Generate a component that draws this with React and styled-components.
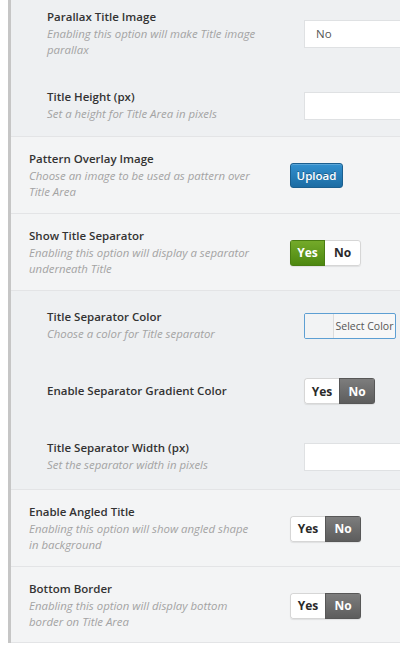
import React from 'react';
import styled, { createGlobalStyle, css } from 'styled-components';

const Global = createGlobalStyle`
  html, body { margin: 0; padding: 0; background: #fff; }
  body { font-family: "Open Sans", "Noto Sans", "Liberation Sans", sans-serif; }
  #root { width: 400px; height: 650px; overflow: hidden; }
`;

const Panel = styled.div`
  margin-left: 8px;
  border-left: 3px solid #c6c6c6;
  background: #f3f4f5;
`;

const Section = styled.div`
  background: ${p => (p.$nested ? '#eef0f2' : '#f3f4f5')};
  border-bottom: 1px solid #e3e4e6;
`;

const Row = styled.div`
  display: grid;
  grid-template-columns: ${p => (p.$nested ? '257px' : '261px')} 1fr;
  align-items: center;
  padding: ${p => p.$pt}px 0 ${p => p.$pb}px ${p => (p.$nested ? 36 : 18)}px;
`;

const Label = styled.div`
  display: flex;
  flex-direction: column;
`;

const Title = styled.div`
  font-size: 11.5px;
  line-height: 16px;
  font-weight: 600;
  color: #333;
  white-space: nowrap;
`;

const Desc = styled.div`
  margin-top: 1px;
  font-size: 11.4px;
  line-height: 16px;
  font-style: italic;
  color: #a3a3a3;
  white-space: nowrap;
`;

const Control = styled.div`
  display: flex;
  align-items: center;
  min-width: 0;
`;

const TextBox = styled.div`
  box-sizing: border-box;
  width: 140px;
  flex-shrink: 0;
  height: 28px;
  background: #fff;
  border: 1px solid #dfe1e3;
  display: flex;
  align-items: center;
  padding-left: 11px;
  font-size: 11.5px;
  color: #555;
`;

const UploadButton = styled.button`
  box-sizing: border-box;
  width: 53px;
  height: 25px;
  border-radius: 3px;
  border: 1px solid #1b5f8f;
  background: linear-gradient(#3290cf, #1c6ca3);
  color: #fff;
  font-family: inherit;
  font-size: 11.5px;
  font-weight: 600;
  text-shadow: 0 -1px 0 rgba(0, 0, 0, 0.3);
  box-shadow: inset 0 1px 0 rgba(255, 255, 255, 0.2);
  padding: 0;
`;

const ColorPicker = styled.div`
  box-sizing: border-box;
  width: 92px;
  height: 26px;
  border: 1px solid #5d9fd3;
  border-radius: 2px;
  display: flex;
  overflow: hidden;
  background: #f7f7f7;
`;

const Swatch = styled.span`
  width: 28px;
  background: #f2f3f4;
  border-right: 1px solid #dcdcdc;
`;

const ColorText = styled.span`
  flex: 1;
  display: flex;
  align-items: center;
  justify-content: center;
  font-size: 10.5px;
  color: #555;
`;

const Toggle = styled.div`
  display: inline-flex;
  height: 26px;
  border-radius: 3px;
  overflow: hidden;
  box-shadow: 0 1px 1px rgba(0, 0, 0, 0.08);
`;

const Seg = styled.span`
  box-sizing: border-box;
  width: ${p => (p.$kind === 'yes' ? 35 : 36)}px;
  display: flex;
  align-items: center;
  justify-content: center;
  font-size: 12px;
  font-weight: 700;
  ${p =>
    p.$on
      ? p.$kind === 'yes'
        ? css`
            background: linear-gradient(#74aa2a, #4d8810);
            color: #fff;
            border: 1px solid #4a7d12;
          `
        : css`
            background: linear-gradient(#7d7d7d, #5d5d5d);
            color: #fff;
            border: 1px solid #575757;
          `
      : css`
          background: #fff;
          color: #2a2a2a;
          border: 1px solid #d6d6d6;
          ${p.$kind === 'yes' ? 'border-right: none;' : 'border-left: none;'}
          border-radius: ${p.$kind === 'yes' ? '3px 0 0 3px' : '0 3px 3px 0'};
        `}
`;

function YesNo({ value }) {
  return (
    <Toggle>
      <Seg $kind="yes" $on={value}>Yes</Seg>
      <Seg $kind="no" $on={!value}>No</Seg>
    </Toggle>
  );
}

function Field({ nested, pt, pb, title, desc = [], children }) {
  return (
    <Row $nested={nested} $pt={pt} $pb={pb}>
      <Label>
        <Title>{title}</Title>
        {desc.length > 0 && (
          <Desc>
            {desc.map((l, i) => (
              <div key={i}>{l}</div>
            ))}
          </Desc>
        )}
      </Label>
      <Control>{children}</Control>
    </Row>
  );
}

export default function App() {
  return (
    <>
      <Global />
      <Panel>
        <Section $nested>
          <Field nested pt={9} pb={16} title="Parallax Title Image" desc={['Enabling this option will make Title image', 'parallax']}>
            <TextBox>No</TextBox>
          </Field>
          <Field nested pt={15} pb={14} title="Title Height (px)" desc={['Set a height for Title Area in pixels']}>
            <TextBox />
          </Field>
        </Section>
        <Section>
          <Field pt={14} pb={13} title="Pattern Overlay Image" desc={['Choose an image to be used as pattern over', 'Title Area']}>
            <UploadButton>Upload</UploadButton>
          </Field>
        </Section>
        <Section>
          <Field pt={14} pb={13} title="Show Title Separator" desc={['Enabling this option will display a separator', 'underneath Title']}>
            <YesNo value={true} />
          </Field>
        </Section>
        <Section $nested>
          <Field nested pt={18} pb={18} title="Title Separator Color" desc={['Choose a color for Title separator']}>
            <ColorPicker>
              <Swatch />
              <ColorText>Select Color</ColorText>
            </ColorPicker>
          </Field>
          <Field nested pt={18} pb={18} title="Enable Separator Gradient Color">
            <YesNo value={false} />
          </Field>
          <Field nested pt={18} pb={16} title="Title Separator Width (px)" desc={['Set the separator width in pixels']}>
            <TextBox />
          </Field>
        </Section>
        <Section>
          <Field pt={14} pb={13} title="Enable Angled Title" desc={['Enabling this option will show angled shape', 'in background']}>
            <YesNo value={false} />
          </Field>
        </Section>
        <Section>
          <Field pt={14} pb={12} title="Bottom Border" desc={['Enabling this option will display bottom', 'border on Title Area']}>
            <YesNo value={false} />
          </Field>
        </Section>
      </Panel>
    </>
  );
}
